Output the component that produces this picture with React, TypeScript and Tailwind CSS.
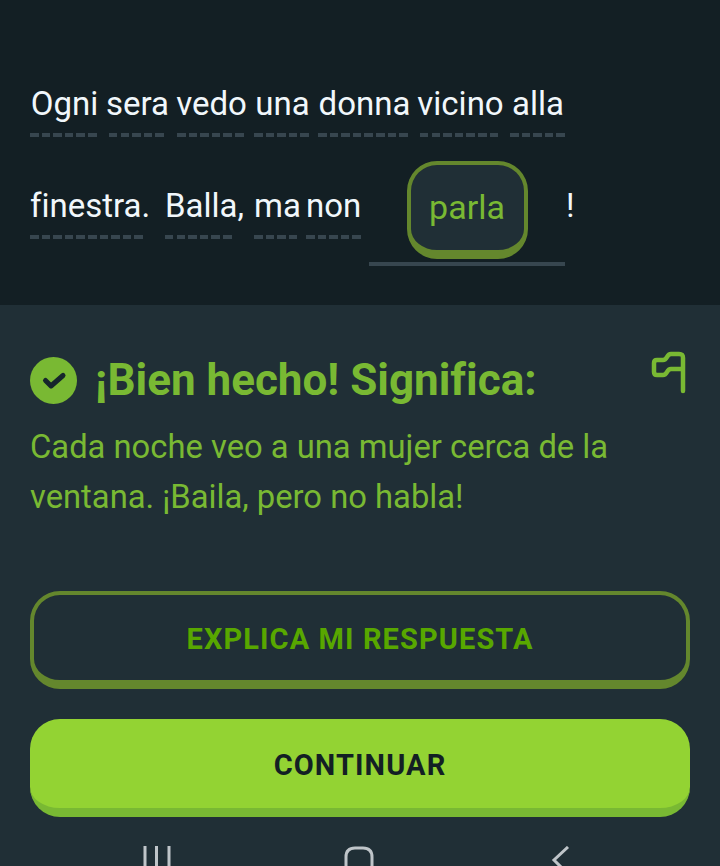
function Word({ text, className, center }: { text: string; className: string; center?: boolean }) {
  return (
    <span className={`flex flex-col shrink-0 ${center ? "items-center" : ""} ${className}`}>
      <span className="text-[33px] leading-[44px] text-[#f1f7fb] whitespace-nowrap">{text}</span>
      <span className="mt-[7px] w-full h-[4px] bg-[repeating-linear-gradient(90deg,#37464f_0,#37464f_8.5px,transparent_8.5px,transparent_11.6px)]" />
    </span>
  );
}

function FlagIcon() {
  return (
    <svg width="38" height="44" viewBox="0 0 38 44" fill="none" stroke="#79b933" strokeWidth="4.5" strokeLinecap="round" strokeLinejoin="round" className="mr-[4px]">
      <path d="M35 41V8c0-3-1-4-4-4H23c-2 0-3 1-4 3-1 2-2 3-4 3H9c-2 0-3 1-3 3v9c0 2 1 3 3 3h6c2 0 3-1 4-3 1-2 2-3 4-3h12" />
    </svg>
  );
}

function CheckBadge() {
  return (
    <svg width="47" height="47" viewBox="0 0 47 47" className="shrink-0">
      <circle cx="23.5" cy="23.5" r="23.5" fill="#79b933" />
      <path d="M15.5 23.5l5.5 5.5L33 18.5" fill="none" stroke="#16262c" strokeWidth="5" strokeLinecap="round" strokeLinejoin="round" />
    </svg>
  );
}

export default function App() {
  return (
    <div className="font-['Roboto',sans-serif] [font-variant-ligatures:none] w-[720px] h-[866px] overflow-hidden flex flex-col bg-[#202f36]">
      <div className="h-[305px] shrink-0 bg-[#131f24] pl-[30px] pt-[82px]">
        <div className="flex">
          <Word center text="Ogni" className="w-[69px] mr-[10px]" />
          <Word center text="sera" className="w-[57px] mr-[11px]" />
          <Word center text="vedo" className="w-[69px] mr-[8px]" />
          <Word center text="una" className="w-[57px] mr-[7px]" />
          <Word center text="donna" className="w-[93px] mr-[9px]" />
          <Word center text="vicino" className="w-[81px] mr-[9px]" />
          <Word center text="alla" className="w-[56px]" />
        </div>
        <div className="flex mt-[47px] items-start">
          <Word text="finestra." className="w-[116px] mr-[19px]" />
          <Word text="Balla," className="w-[69px] mr-[20px]" />
          <Word text="ma" className="w-[45px] mr-[7px]" />
          <Word text="non" className="w-[56px] mr-[7px]" />
          <div className="w-[196px] h-[105px] mt-[-23px] border-b-[4px] border-[#37464f] flex justify-center">
            <div className="w-[121px] h-[98px] rounded-[30px] border-[4px] border-b-[9px] border-[#64872d] bg-[#202f36] flex items-center justify-center text-[34px] text-[#79b933]">
              parla
            </div>
          </div>
          <span className="ml-[1px] text-[33px] leading-[44px] text-[#f1f7fb]">!</span>
        </div>
      </div>
      <div className="flex-1 px-[30px] flex flex-col">
        <div className="flex items-start justify-between mt-[45px]">
          <div className="flex items-center gap-[18px] mt-[7px]">
            <CheckBadge />
            <span className="text-[44px] leading-[47px] font-bold text-[#79b933]">¡Bien hecho! Significa:</span>
          </div>
          <FlagIcon />
        </div>
        <p className="text-[32.75px] leading-[50px] text-[#79b933] mt-[18px]">
          Cada noche veo a una mujer cerca de la<br />ventana. ¡Baila, pero no habla!
        </p>
        <button className="mt-[69px] h-[98px] pt-[5px] w-full shrink-0 rounded-[30px] border-[4px] border-b-[9px] border-[#64872d] text-[29px] font-bold tracking-[1.1px] text-[#58a700]">
          EXPLICA MI RESPUESTA
        </button>
        <button className="mt-[30px] h-[98px] pt-[5px] w-full shrink-0 rounded-[30px] bg-[#93d333] border-b-[9px] border-[#79b933] text-[29px] font-bold tracking-[1.1px] text-[#131f24]">
          CONTINUAR
        </button>
        <div className="mt-[29px] h-[20px] flex justify-between pl-[113px] pr-[119px] overflow-hidden shrink-0">
          <svg width="28" height="20" viewBox="0 0 28 20" fill="none" stroke="#bfc5c9" strokeWidth="3">
            <path d="M2 0v20M13.5 0v20M26 0v20" />
          </svg>
          <svg width="30" height="24" viewBox="0 0 30 24" fill="none" stroke="#bfc5c9" strokeWidth="3" className="mr-[5px]">
            <path d="M2 24V11C2 5 5 2 11 2h8c6 0 9 3 9 9v13" />
          </svg>
          <svg width="20" height="24" viewBox="0 0 20 24" fill="none" stroke="#bfc5c9" strokeWidth="3">
            <path d="M17 1L3 14l8 8" />
          </svg>
        </div>
      </div>
    </div>
  );
}
